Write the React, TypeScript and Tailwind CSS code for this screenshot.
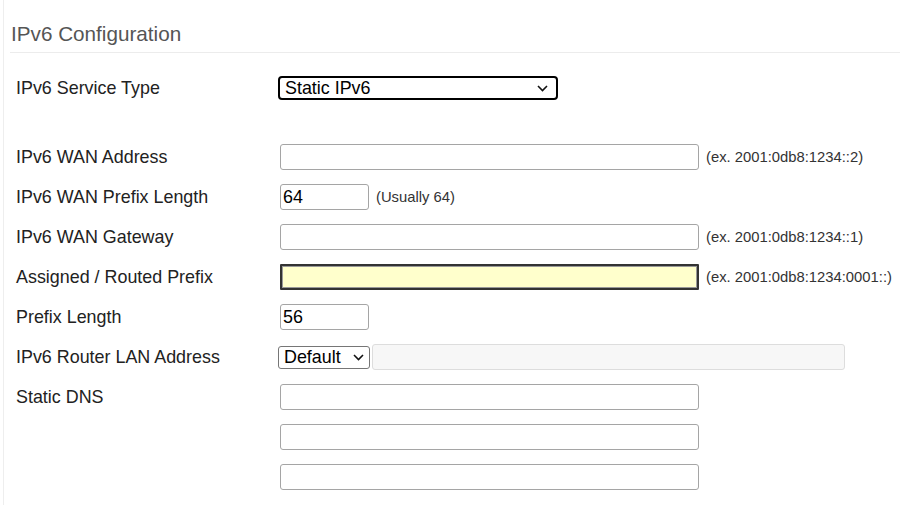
import React from "react";

const Chevron = () => (
  <svg width="11" height="7" viewBox="0 0 11 7" className="shrink-0">
    <path d="M1 1 L5.5 5.5 L10 1" fill="none" stroke="#111" strokeWidth="1.6" />
  </svg>
);

const Row = ({ label, children }: { label?: string; children?: React.ReactNode }) => (
  <div className="flex h-[40px] items-center">
    <div className="w-[270px] shrink-0 pl-[6px] text-[17.9px] text-[#222]">{label}</div>
    <div className="flex items-center">{children}</div>
  </div>
);

const TextInput = ({ w, value, className = "" }: { w: string; value?: string; className?: string }) => (
  <input
    readOnly
    value={value ?? ""}
    className={`${w} h-[26px] rounded-[3px] border border-[#a5a5a5] bg-white px-[2px] text-[17.9px] text-black outline-none ${className}`}
    style={{ fontFamily: '"Liberation Sans", Arial, sans-serif' }}
  />
);

const Hint = ({ children }: { children: React.ReactNode }) => (
  <span className="text-[14.8px] text-[#333]">{children}</span>
);

export default function App() {
  return (
    <div
      className="min-h-[505px] w-[900px] bg-white"
      style={{ fontFamily: '"Liberation Sans", Arial, sans-serif' }}
    >
      <div className="ml-[3px] min-h-[505px] border-l border-[#eeeeee] pl-[6px]">
        <div className="pt-[22px] pb-[6px] pl-[1px] text-[20.7px] leading-[24px] text-[#555]">IPv6 Configuration</div>
        <div className="border-t border-[#ececec]" />
        <div className="h-[15px]" />
        <Row label="IPv6 Service Type">
          <div className="ml-[-2px] flex h-[24px] w-[280px] items-center justify-between rounded-[4px] border-2 border-black pl-[5px] pr-[8px] text-[17.9px] text-black">
            <span>Static IPv6</span>
            <Chevron />
          </div>
        </Row>
        <div className="h-[29px]" />
        <Row label="IPv6 WAN Address">
          <TextInput w="w-[419px]" />
          <span className="ml-[7px]"><Hint>(ex. 2001:0db8:1234::2)</Hint></span>
        </Row>
        <Row label="IPv6 WAN Prefix Length">
          <TextInput w="w-[89px]" value="64" />
          <span className="ml-[7px]"><Hint>(Usually 64)</Hint></span>
        </Row>
        <Row label="IPv6 WAN Gateway">
          <TextInput w="w-[419px]" />
          <span className="ml-[7px]"><Hint>(ex. 2001:0db8:1234::1)</Hint></span>
        </Row>
        <Row label="Assigned / Routed Prefix">
          <div className="h-[26px] w-[419px] rounded-[1px] border-2 border-[#333] bg-[#ffffcc] [box-shadow:inset_0_0_0_1px_#999]" />
          <span className="ml-[7px]"><Hint>(ex. 2001:0db8:1234:0001::)</Hint></span>
        </Row>
        <Row label="Prefix Length">
          <TextInput w="w-[89px]" value="56" />
        </Row>
        <Row label="IPv6 Router LAN Address">
          <div className="ml-[-2px] flex h-[23px] w-[92px] items-center justify-between rounded-[3px] border border-[#767676] pl-[5px] pr-[5px] text-[17.9px] text-black">
            <span>Default</span>
            <Chevron />
          </div>
          <div className="ml-[2px] h-[26px] w-[473px] rounded-[3px] border border-[#dddddd] bg-[#f7f7f7]" />
        </Row>
        <Row label="Static DNS">
          <TextInput w="w-[419px]" />
        </Row>
        <Row>
          <TextInput w="w-[419px]" />
        </Row>
        <Row>
          <TextInput w="w-[419px]" />
        </Row>
      </div>
    </div>
  );
}
